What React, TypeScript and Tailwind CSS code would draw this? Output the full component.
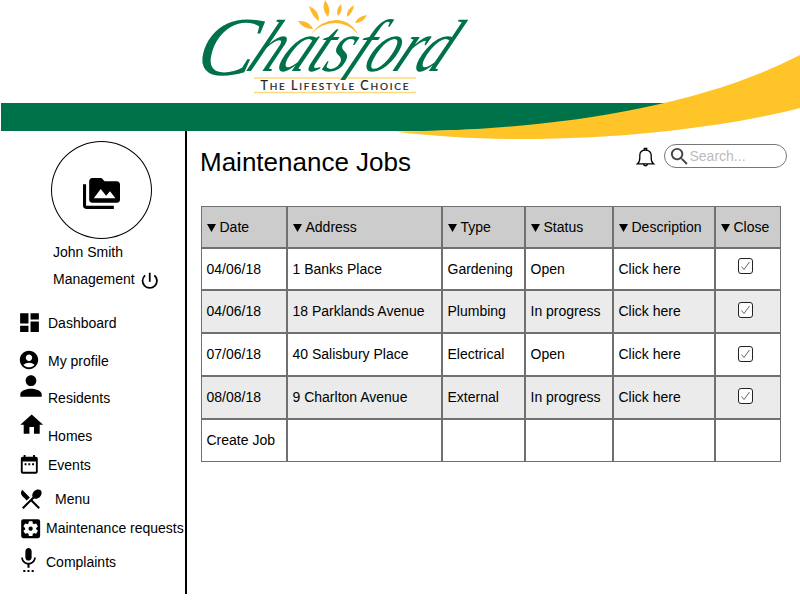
import React from "react";
import {
  MdPermMedia,
  MdPowerSettingsNew,
  MdDashboard,
  MdAccountCircle,
  MdPerson,
  MdHome,
  MdDateRange,
  MdRestaurantMenu,
  MdSettingsApplications,
  MdSettingsVoice,
  MdSearch,
} from "react-icons/md";

const nav = [
  { label: "Dashboard", Icon: MdDashboard, size: 25, row: "", icon: "ml-[17px] -mt-px", text: "ml-12" },
  { label: "My profile", Icon: MdAccountCircle, size: 22, row: "mt-3.5", icon: "ml-[18px] mt-0", text: "ml-12" },
  { label: "Residents", Icon: MdPerson, size: 32, row: "mt-[13px]", icon: "ml-[14.5px] -mt-[16.5px]", text: "ml-12" },
  { label: "Homes", Icon: MdHome, size: 27.4, row: "mt-3.5", icon: "ml-[18px] -mt-[13px]", text: "ml-12" },
  { label: "Events", Icon: MdDateRange, size: 22.6, row: "mt-[5px]", icon: "ml-[18px] mt-0", text: "ml-12" },
  { label: "Menu", Icon: MdRestaurantMenu, size: 26, row: "mt-2.5", icon: "ml-[17.5px] -mt-px", text: "ml-[55px]" },
  { label: "Maintenance requests", Icon: MdSettingsApplications, size: 25.3, row: "mt-[5px]", icon: "ml-[17.5px] mt-0", text: "ml-[46px]" },
  { label: "Complaints", Icon: MdSettingsVoice, size: 25, row: "mt-2.5", icon: "ml-4 -mt-[3px]", text: "ml-[46px]" },
];

const columns = ["Date", "Address", "Type", "Status", "Description", "Close"];

const jobs = [
  { cells: ["04/06/18", "1 Banks Place", "Gardening", "Open", "Click here"], bg: "bg-white", check: "mt-[9px]" },
  { cells: ["04/06/18", "18 Parklands Avenue", "Plumbing", "In progress", "Click here"], bg: "bg-[#ebebeb]", check: "mt-[11px]" },
  { cells: ["07/06/18", "40 Salisbury Place", "Electrical", "Open", "Click here"], bg: "bg-white", check: "mt-3" },
  { cells: ["08/08/18", "9 Charlton Avenue", "External", "In progress", "Click here"], bg: "bg-[#ebebeb]", check: "mt-[11px]" },
];

const cell = "border border-[#707070] pl-[4.5px] flex items-center whitespace-nowrap";

function Header() {
  return (
    <svg className="block h-[141px] w-[800px] shrink-0" viewBox="0 0 800 141">
      <path d="M1 103H670L600 125L430 131H1Z" fill="#00724a" />
      <path d="M395 131.5C530 131 690 112 800 55V108C700 134 530 149 395 131.5Z" fill="#ffc427" />
      <g fill="#fdb92a">
        <path d="M298 21Q309 20 313 29Q303 29 298 21ZM309 6Q320 11 319 21Q312 17 309 6ZM325 0Q332 9 328 17Q321 10 325 0ZM341 4Q343 11 338 16Q335 10 341 4ZM354 5Q353 13 347 17Q346 10 354 5ZM367 15Q363 23 355 23Q358 16 367 15Z" />
        <path d="M311 34Q322 20 336 20Q350 20 358 34Q348 23 335 23Q322 23 311 34Z" />
      </g>
      <path d="M254 78H416M254 92.5H416" stroke="#ffda7d" strokeWidth="1.5" />
      <g fill="#00724a" fontFamily="'Liberation Serif', serif" fontStyle="italic">
        <text transform="translate(193 75) skewX(-14)" fontSize="84" textLength="58" lengthAdjust="spacingAndGlyphs">C</text>
        <text transform="translate(244 71) skewX(-28)" fontSize="74" textLength="197" lengthAdjust="spacingAndGlyphs">hatsford</text>
      </g>
      <rect x="256" y="80" width="158" height="11" fill="#fff" />
      <g fill="#222" fontFamily="Lato, sans-serif" stroke="#222" strokeWidth="0.2">
        <text x="260.500" y="90" fontSize="12.500" textLength="148" lengthAdjust="spacing">
          T<tspan fontSize="10">HE </tspan>L<tspan fontSize="10">IFESTYLE </tspan>C<tspan fontSize="10">HOICE</tspan>
        </text>
      </g>
    </svg>
  );
}

function Sidebar() {
  return (
    <aside className="h-[463px] w-[187px] shrink-0 border-r-2 border-black pt-2.5">
      <div className="ml-[51px] flex h-[98px] w-[101px] items-center justify-center rounded-[50%] border border-black">
        <MdPermMedia size={37} className="mt-[7px]" />
      </div>
      <div className="ml-[53px] mt-[3px] h-5 leading-5">John Smith</div>
      <div className="ml-[53px] mt-[7px] flex h-5 leading-5">
        <span className="w-[86px]">Management</span>
        <MdPowerSettingsNew size={21.500} className="mt-[0.5px] shrink-0" />
      </div>
      <nav className="mt-[22px]">
        {nav.map(({ label, Icon, size, row, icon, text }) => (
          <div key={label} className={`grid h-6 ${row}`}>
            <div className="col-start-1 row-start-1 h-6">
              <Icon size={size} className={icon} />
            </div>
            <span className={`col-start-1 row-start-1 whitespace-nowrap leading-6 ${text}`}>{label}</span>
          </div>
        ))}
      </nav>
    </aside>
  );
}

function Bell() {
  return (
    <svg className="mt-[3px] h-5 w-5" viewBox="0 0 20 20" fill="none" stroke="#000" strokeWidth="1.300">
      <path d="M1.500 16.800C3.300 15.500 3.800 14 3.800 11V8.500C3.800 5 6.200 3.200 9.500 3.200S15.200 5 15.200 8.500V11C15.200 14 15.700 15.500 17.500 16.800Z" />
      <path d="M8.300 3.200V1.500H10.700V3.200M7.500 17Q8 18.800 9.500 18.800Q11 18.800 11.500 17" />
    </svg>
  );
}

function Checkbox() {
  return (
    <svg className="h-4 w-[15px]" viewBox="0 0 15 16" fill="none">
      <rect x="0.500" y="0.500" width="14" height="15" rx="2.500" fill="#fff" stroke="#222" />
      <path d="M3.500 8.500L6 11.500L11.500 4" stroke="#555" strokeWidth="0.900" />
    </svg>
  );
}

function JobsTable() {
  return (
    <div className="ml-3.5 mt-[30px] grid w-[580px] grid-cols-[86px_155px_83px_88px_102px_66px] grid-rows-[42px_42px_43px_43px_43px_43px]">
      {columns.map((c) => (
        <div key={c} className={`${cell} bg-[#ccc]`}>
          <svg className="mr-1 mt-0.5 h-2 w-[9px]" viewBox="0 0 9 8">
            <path d="M0 0H9L4.500 8Z" />
          </svg>
          {c}
        </div>
      ))}
      {jobs.map((job, i) => (
        <React.Fragment key={i}>
          {job.cells.map((text, j) => (
            <div key={j} className={`${cell} ${job.bg}`}>{text}</div>
          ))}
          <div className={`border border-[#707070] pl-[22px] ${job.bg}`}>
            <div className={job.check}><Checkbox /></div>
          </div>
        </React.Fragment>
      ))}
      {["Create Job", "", "", "", "", ""].map((text, i) => (
        <div key={i} className={cell}>{text}</div>
      ))}
    </div>
  );
}

export default function App() {
  return (
    <div className="flex h-[600px] w-[800px] flex-col overflow-hidden bg-white font-['Liberation_Sans',Arial,sans-serif] text-[14px] text-black">
      <Header />
      <div className="-mt-2.5 flex">
        <Sidebar />
        <main className="w-[613px] pt-[13px]">
          <div className="flex h-8">
            <h1 className="ml-[13px] w-[436px] text-[26px] leading-9">Maintenance Jobs</h1>
            <Bell />
            <div className="ml-2 flex h-6 w-[123px] items-center rounded-full border border-[#777] pl-[3px] text-[#bbb]">
              <MdSearch size={23} className="text-[#444]" />
              <span className="-ml-[1.5px]">Search...</span>
            </div>
          </div>
          <JobsTable />
        </main>
      </div>
    </div>
  );
}
